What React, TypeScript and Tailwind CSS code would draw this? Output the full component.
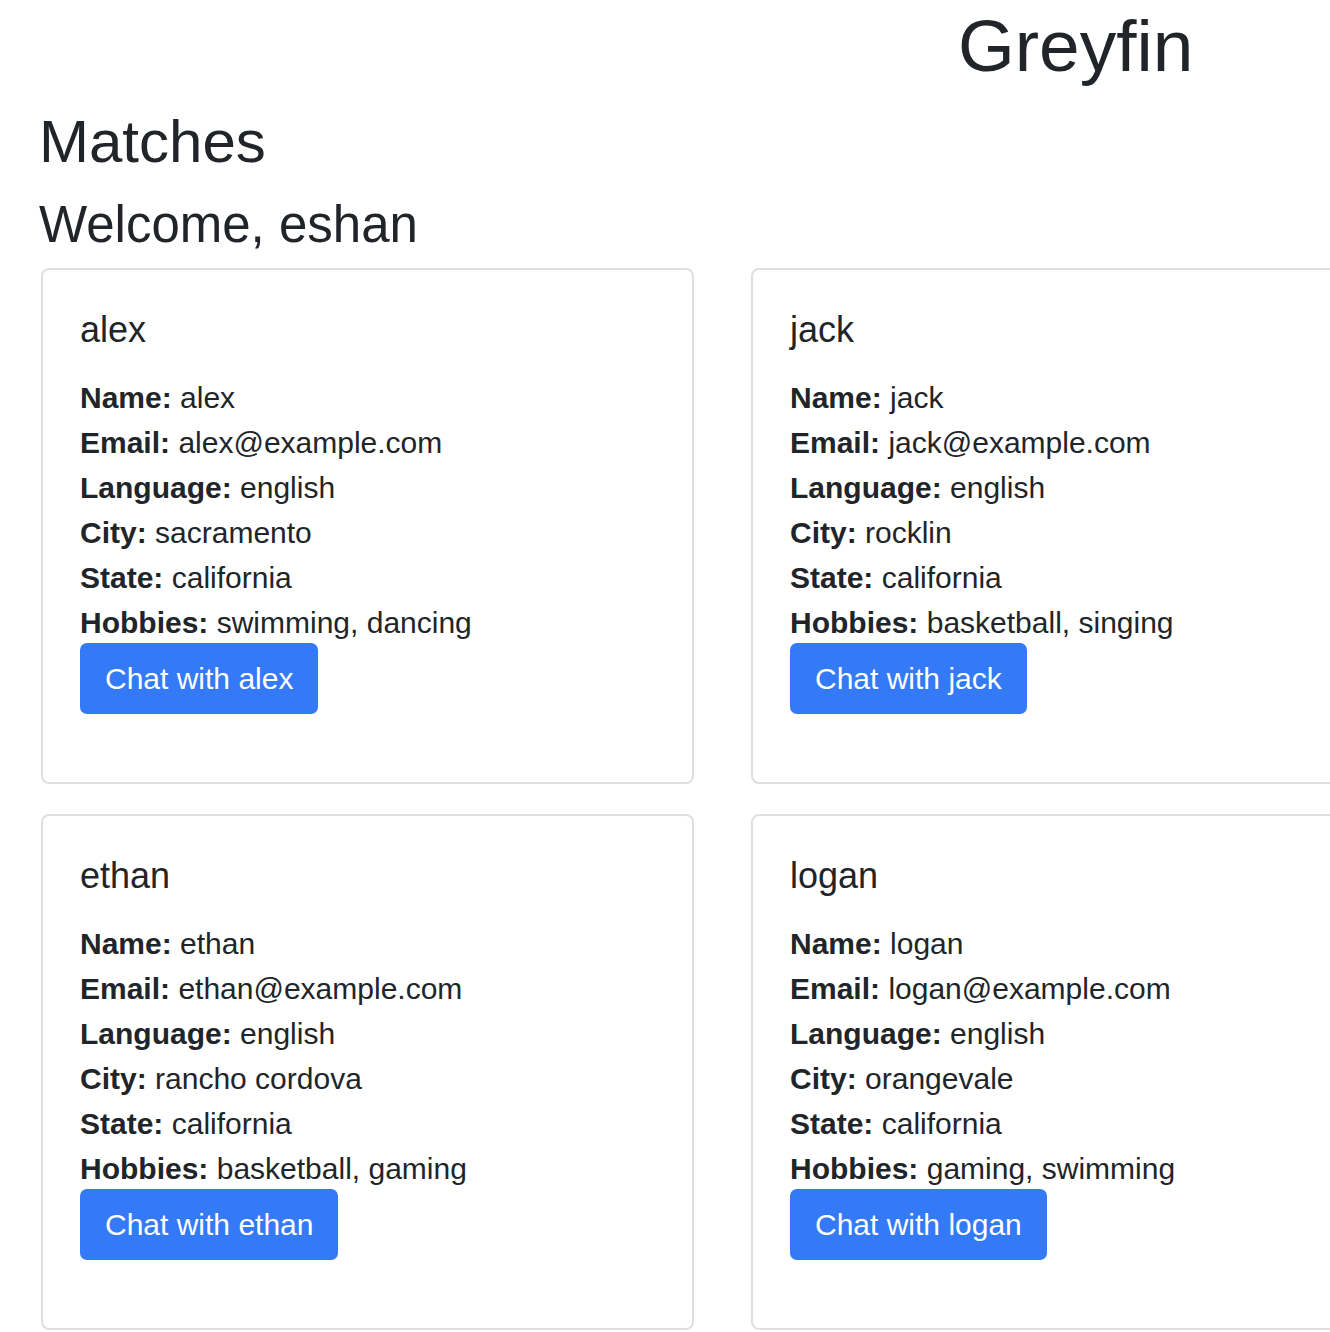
import React from "react";

type Match = {
  name: string;
  email: string;
  language: string;
  city: string;
  state: string;
  hobbies: string;
};

const matches: Match[] = [
  { name: "alex", email: "alex@example.com", language: "english", city: "sacramento", state: "california", hobbies: "swimming, dancing" },
  { name: "jack", email: "jack@example.com", language: "english", city: "rocklin", state: "california", hobbies: "basketball, singing" },
  { name: "ethan", email: "ethan@example.com", language: "english", city: "rancho cordova", state: "california", hobbies: "basketball, gaming" },
  { name: "logan", email: "logan@example.com", language: "english", city: "orangevale", state: "california", hobbies: "gaming, swimming" },
];

const MatchCard = ({ match }: { match: Match }) => {
  const rows: [string, string][] = [
    ["Name", match.name],
    ["Email", match.email],
    ["Language", match.language],
    ["City", match.city],
    ["State", match.state],
    ["Hobbies", match.hobbies],
  ];

  return (
    <div className="w-[653px] h-[516px] rounded-[8px] border-2 border-[#dfdfdf] bg-white pl-[37px] pt-[42px]">
      <h5 className="text-[36px] leading-[36px] font-normal">{match.name}</h5>
      <div className="mt-[27px]">
        {rows.map(([label, value]) => (
          <p key={label} className="text-[30px] leading-[45px]">
            <span className="font-bold">{label}:</span> {value}
          </p>
        ))}
      </div>
      <button className="mt-[-2px] h-[71px] px-[25px] rounded-[7px] bg-[#3479f6] text-white text-[30px] leading-none">
        Chat with {match.name}
      </button>
    </div>
  );
};

export default function App() {
  return (
    <div
      className="w-full min-h-[1332px] overflow-hidden bg-white text-[#212529]"
      style={{ fontFamily: '"Liberation Sans", Arial, sans-serif' }}
    >
      <div className="pl-[958px] pt-[10px]">
        <h1 className="text-[73px] leading-[72px] font-normal">Greyfin</h1>
      </div>
      <div className="pl-[39px]">
        <h2 className="mt-[30px] text-[60px] leading-[59px] font-normal">Matches</h2>
        <h3 className="mt-[29px] text-[51px] leading-[50px] font-normal">Welcome, eshan</h3>
      </div>
      <div className="mt-[18px] pl-[41px] grid grid-cols-[653px_653px] gap-x-[57px] gap-y-[30px] w-[1500px]">
        {matches.map((m) => (
          <MatchCard key={m.name} match={m} />
        ))}
      </div>
    </div>
  );
}
